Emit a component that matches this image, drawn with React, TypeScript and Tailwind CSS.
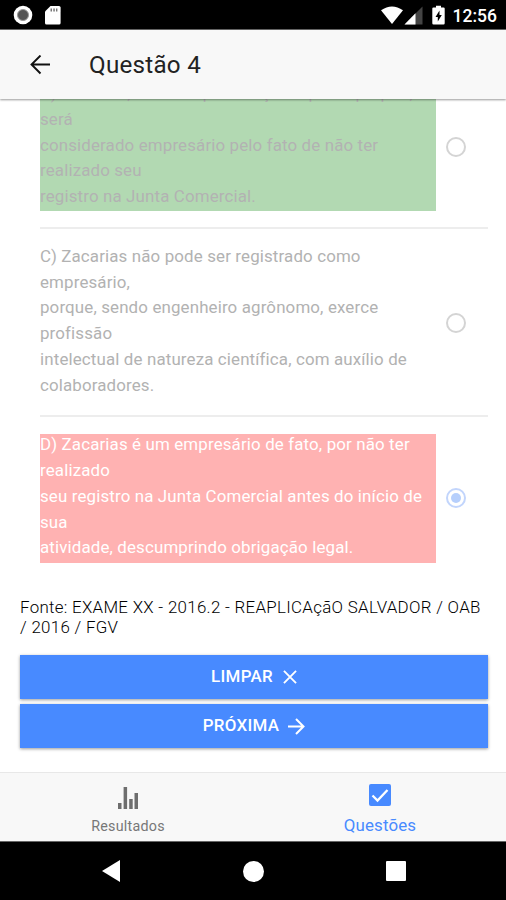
import React, { useState } from "react";

const options = [
  {
    id: "B",
    lines: [
      "B) Zacarias, mesmo que exerça empresa própria, será",
      "considerado empresário pelo fato de não ter realizado seu",
      "registro na Junta Comercial.",
    ],
    box: "bg-[#b2d9b2] text-[#b2b2b2]",
  },
  {
    id: "C",
    lines: [
      "C) Zacarias não pode ser registrado como empresário,",
      "porque, sendo engenheiro agrônomo, exerce profissão",
      "intelectual de natureza científica, com auxílio de colaboradores.",
    ],
    box: "text-[#b2b2b2]",
  },
  {
    id: "D",
    lines: [
      "D) Zacarias é um empresário de fato, por não ter realizado",
      "seu registro na Junta Comercial antes do início de sua",
      "atividade, descumprindo obrigação legal.",
    ],
    box: "bg-[#ffb2b2] text-white",
  },
];

const StatusBar = () => (
  <div className="flex h-[30px] shrink-0 items-center justify-between border-b border-[#666] bg-black pl-[13px] pr-[9px] text-white">
    <div className="flex items-center gap-[12px]">
      <svg width="20" height="20" viewBox="0 0 20 20">
        <circle cx="10" cy="10" r="9.3" fill="#fff" />
        <circle cx="10" cy="10" r="5.5" fill="#555" stroke="#999" strokeWidth="1" />
      </svg>
      <svg width="16" height="20" viewBox="0 0 16 20">
        <path d="M5.5 1H14a1.6 1.6 0 0 1 1.6 1.6v15.3a1.6 1.6 0 0 1-1.6 1.6H1.6A1.6 1.6 0 0 1 0 17.9V6.5z" fill="#fff" />
        <path d="M5.5 3.5H7v3H5.5zM8.3 3.5h1.5v3H8.3zM11 3.5h1.4v3H11z" fill="#777" />
      </svg>
    </div>
    <div className="flex items-center">
      <svg width="22" height="20" viewBox="0 0 23 20">
        <path d="M0 5Q11.5-3 23 5L11.5 19.5z" fill="#fff" />
      </svg>
      <svg className="ml-[1px]" width="19" height="20" viewBox="0 0 19 20">
        <path d="M18.5 1.5V19.5H.5z" fill="#444" />
        <path d="M11.5 8.3V19.5H.5z" fill="#fff" />
      </svg>
      <svg className="ml-[9px]" width="13" height="20" viewBox="0 0 13 20">
        <path d="M4 .8h5v1.6h2.5a1.2 1.2 0 0 1 1.2 1.2v14.7a1.2 1.2 0 0 1-1.2 1.2h-10A1.2 1.2 0 0 1 .3 18.3V3.600a1.2 1.2 0 0 1 1.2-1.2H4z" fill="#fff" />
        <path d="M7.5 5.500L3.500 12h2.300v4.500L9.800 10H7.500z" fill="#000" />
      </svg>
      <span className="ml-[8px] mt-[2px] text-[17.5px] leading-[20px] font-medium">12:56</span>
    </div>
  </div>
);

const Header = () => (
  <div className="z-10 flex h-[69px] shrink-0 items-center bg-[#f8f8f8] pl-[30px] shadow-[0_1px_2px_rgba(0,0,0,0.4)]">
    <button aria-label="Voltar">
      <svg width="20" height="20" viewBox="0 0 20 20" fill="none" stroke="#111" strokeWidth="1.9">
        <path d="M20 9.500H1.800M10.500 .5L1.500 9.500l9 9" />
      </svg>
    </button>
    <h1 className="ml-[39px] text-[24.2px] leading-[30px] tracking-[0.25px] text-[#222]">Questão 4</h1>
  </div>
);

const App = () => {
  const [selected, setSelected] = useState("D");

  return (
    <div className="flex h-[900px] w-[506px] flex-col overflow-hidden bg-white font-[Roboto,sans-serif]">
      <StatusBar />
      <Header />

      <main className="flex min-h-0 flex-1 flex-col justify-end overflow-hidden pb-[24px] pl-[20px] pr-[18px]">
        <div className="pl-[20px]">
          {options.map(({ id, lines, box }, index) => (
            <div
              key={id}
              className={`flex items-center ${index < options.length - 1 ? "mb-[16.5px] border-b-2 border-[#ededed] pb-[15.5px]" : ""}`}
            >
              <div className={`flex w-[396px] flex-col text-[16.9px] leading-[25.75px] tracking-[0.14px] ${box}`}>
                <div className="mb-[1.5px] -mt-[1.5px]">
                  {lines.map((line) => (
                    <p key={line}>{line}</p>
                  ))}
                </div>
              </div>
              <button
                onClick={() => setSelected(id)}
                aria-label={id}
                className={`ml-[10px] flex h-[20px] w-[20px] items-center justify-center rounded-full border-2 ${
                  selected === id ? "border-[#c2d5fc]" : "border-[#d4d4d4]"
                }`}
              >
                {selected === id && <span className="h-[10px] w-[10px] rounded-full bg-[#b6cffc]" />}
              </button>
            </div>
          ))}
        </div>

        <p className="mt-[34.5px] text-[16.9px] leading-[20px] font-light tracking-[0.3px] text-black">
          Fonte: EXAME XX - 2016.2 - REAPLICAçãO SALVADOR / OAB / 2016 / FGV
        </p>

        <div className="mt-[18px] flex flex-col gap-[5px] text-[16.9px] font-medium tracking-[0.3px] text-white">
          <button className="flex h-[44px] items-center justify-center gap-[10px] bg-[#488aff] shadow-[0_1px_3px_rgba(0,0,0,0.4)]">
            LIMPAR
            <svg width="14" height="14" viewBox="0 0 15 15" fill="none" stroke="#fff" strokeWidth="2">
              <path d="M1 1l13 13M14 1L1 14" />
            </svg>
          </button>
          <button className="flex h-[44px] items-center justify-center gap-[9px] bg-[#488aff] shadow-[0_1px_3px_rgba(0,0,0,0.4)]">
            PRÓXIMA
            <svg width="17" height="17" viewBox="0 0 17 17" fill="none" stroke="#fff" strokeWidth="2">
              <path d="M0 8.500h15M8 1l7.500 7.500L8 16" />
            </svg>
          </button>
        </div>
      </main>

      <nav className="flex h-[69px] shrink-0 border-t border-[#e8e8e8] bg-[#f8f8f8] pl-[2px]">
        <div className="flex flex-1 flex-col items-center pt-[13px] text-[#777]">
          <svg width="22" height="24" viewBox="0 0 22 24" fill="#6e6e6e">
            <path d="M1 17h3.500v6H1zM6.600 1h3.500v22H6.600zM12.200 13h3.500v10h-3.500zM17.500 7H21v16h-3.500z" />
          </svg>
          <span className="mt-[6px] text-[14.3px] leading-[20px] tracking-[0.25px]">Resultados</span>
        </div>
        <div className="flex flex-1 flex-col items-center pt-[11px] text-[#488aff]">
          <svg width="22" height="22" viewBox="0 0 22 22">
            <rect width="22" height="22" rx="2" fill="#488aff" />
            <path d="M3.500 11.500L8.500 16.500L18.500 6" fill="none" stroke="#fff" strokeWidth="2.300" />
          </svg>
          <span className="mt-[9px] text-[16.9px] leading-[20px] tracking-[0.15px]">Questões</span>
        </div>
      </nav>

      <div className="flex h-[59px] shrink-0 items-center border-t border-[#666] bg-black pl-[102px]">
        <svg width="18" height="22" viewBox="0 0 18 22">
          <path d="M18 0v22L0 11z" fill="#fff" />
        </svg>
        <div className="ml-[123px] h-[21px] w-[21px] rounded-full bg-white" />
        <div className="ml-[122px] h-[20px] w-[20px] rounded-[1px] bg-white" />
      </div>
    </div>
  );
};

export default App;
